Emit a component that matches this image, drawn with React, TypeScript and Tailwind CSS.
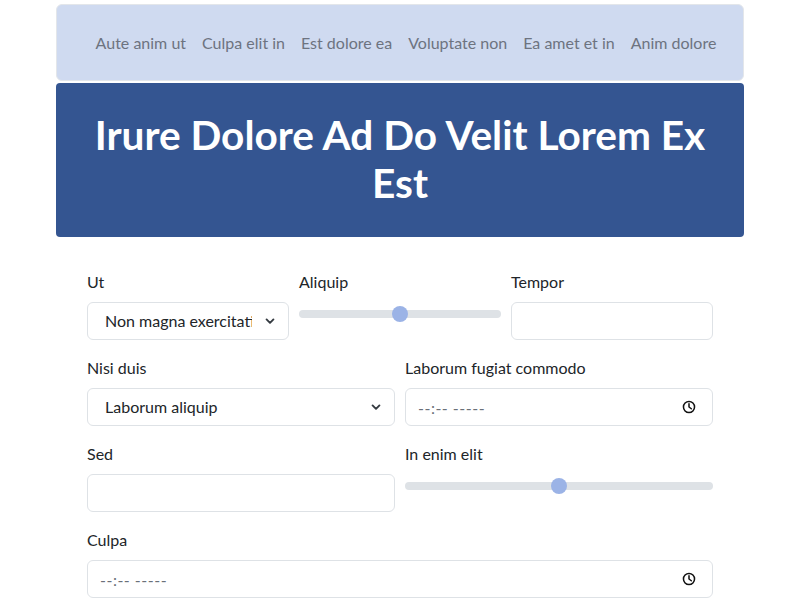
import React from "react";

const font = { fontFamily: 'Lato, "Noto Sans", sans-serif' };

function Label({ children }: { children: React.ReactNode }) {
  return <label className="block mb-2 text-[16px] leading-6 text-[#212529]">{children}</label>;
}

function Select({ value }: { value: string }) {
  return (
    <div className="relative">
      <select
        defaultValue={value}
        className="w-full h-[38px] appearance-none rounded-[6px] border border-[#dee2e6] bg-white pl-[17px] pr-9 text-[16px] text-[#212529] outline-none"
        style={font}
      >
        <option>{value}</option>
      </select>
      <svg className="pointer-events-none absolute right-[14px] top-[14px]" width="10" height="10" viewBox="0 0 16 16">
        <path d="M2.5 5.5l5.5 5.5 5.5-5.5" fill="none" stroke="#343a40" strokeWidth="3" strokeLinecap="round" strokeLinejoin="round" />
      </svg>
    </div>
  );
}

function Range() {
  return (
    <div className="relative h-6 flex items-center">
      <div className="w-full h-2 rounded-full bg-[#dee2e6]" />
      <div className="absolute left-1/2 top-1/2 -translate-x-1/2 -translate-y-1/2 w-4 h-4 rounded-full bg-[#9bb3e6]" />
    </div>
  );
}

function TextInput() {
  return <input type="text" className="block w-full h-[38px] rounded-[6px] border border-[#dee2e6] bg-white px-3 outline-none" />;
}

function TimeInput() {
  return (
    <div className="relative">
      <input
        type="text"
        placeholder="--:-- -----"
        className="block w-full h-[38px] rounded-[6px] border border-[#dee2e6] bg-white px-3 text-[16px] tracking-[0.5px] outline-none placeholder:text-[#6a7079]"
        style={font}
      />
      <svg className="pointer-events-none absolute right-[17px] top-[12px]" width="14" height="14" viewBox="0 0 24 24">
        <circle cx="12" cy="12" r="9.5" fill="none" stroke="#111" strokeWidth="2.6" />
        <path d="M12 6.5v5.5l4 3" fill="none" stroke="#111" strokeWidth="2.6" strokeLinecap="round" strokeLinejoin="round" />
      </svg>
    </div>
  );
}

export default function App() {
  const links = ["Aute anim ut", "Culpa elit in", "Est dolore ea", "Voluptate non", "Ea amet et in", "Anim dolore"];
  return (
    <div className="w-[800px] h-[600px] bg-white overflow-hidden" style={font}>
      <div className="w-[688px] mx-auto pt-1">
        <nav className="h-[77px] rounded-[6px] border border-[#e3e6ea] bg-[#cfdaf0] flex items-center justify-center pl-[12px]">
          {links.map((l) => (
            <a key={l} className="px-2 whitespace-nowrap text-[16px] text-[#6d7380]">{l}</a>
          ))}
        </nav>
        <header className="mt-[2px] h-[154px] rounded-[4px] bg-[#345591] flex items-center justify-center px-8 pb-[3px]">
          <h1 className="text-center text-white font-bold text-[40.6px] leading-[48px]">
            Irure Dolore Ad Do Velit Lorem Ex Est
          </h1>
        </header>
        <form className="px-[31px] pt-[33px]">
          <div className="grid grid-cols-3 gap-x-[10px] mb-4">
            <div>
              <Label>Ut</Label>
              <Select value="Non magna exercitation" />
            </div>
            <div>
              <Label>Aliquip</Label>
              <Range />
            </div>
            <div>
              <Label>Tempor</Label>
              <TextInput />
            </div>
          </div>
          <div className="grid grid-cols-2 gap-x-[10px] mb-4">
            <div>
              <Label>Nisi duis</Label>
              <Select value="Laborum aliquip" />
            </div>
            <div>
              <Label>Laborum fugiat commodo</Label>
              <TimeInput />
            </div>
          </div>
          <div className="grid grid-cols-2 gap-x-[10px] mb-4">
            <div>
              <Label>Sed</Label>
              <TextInput />
            </div>
            <div>
              <Label>In enim elit</Label>
              <Range />
            </div>
          </div>
          <div>
            <Label>Culpa</Label>
            <TimeInput />
          </div>
        </form>
      </div>
    </div>
  );
}
